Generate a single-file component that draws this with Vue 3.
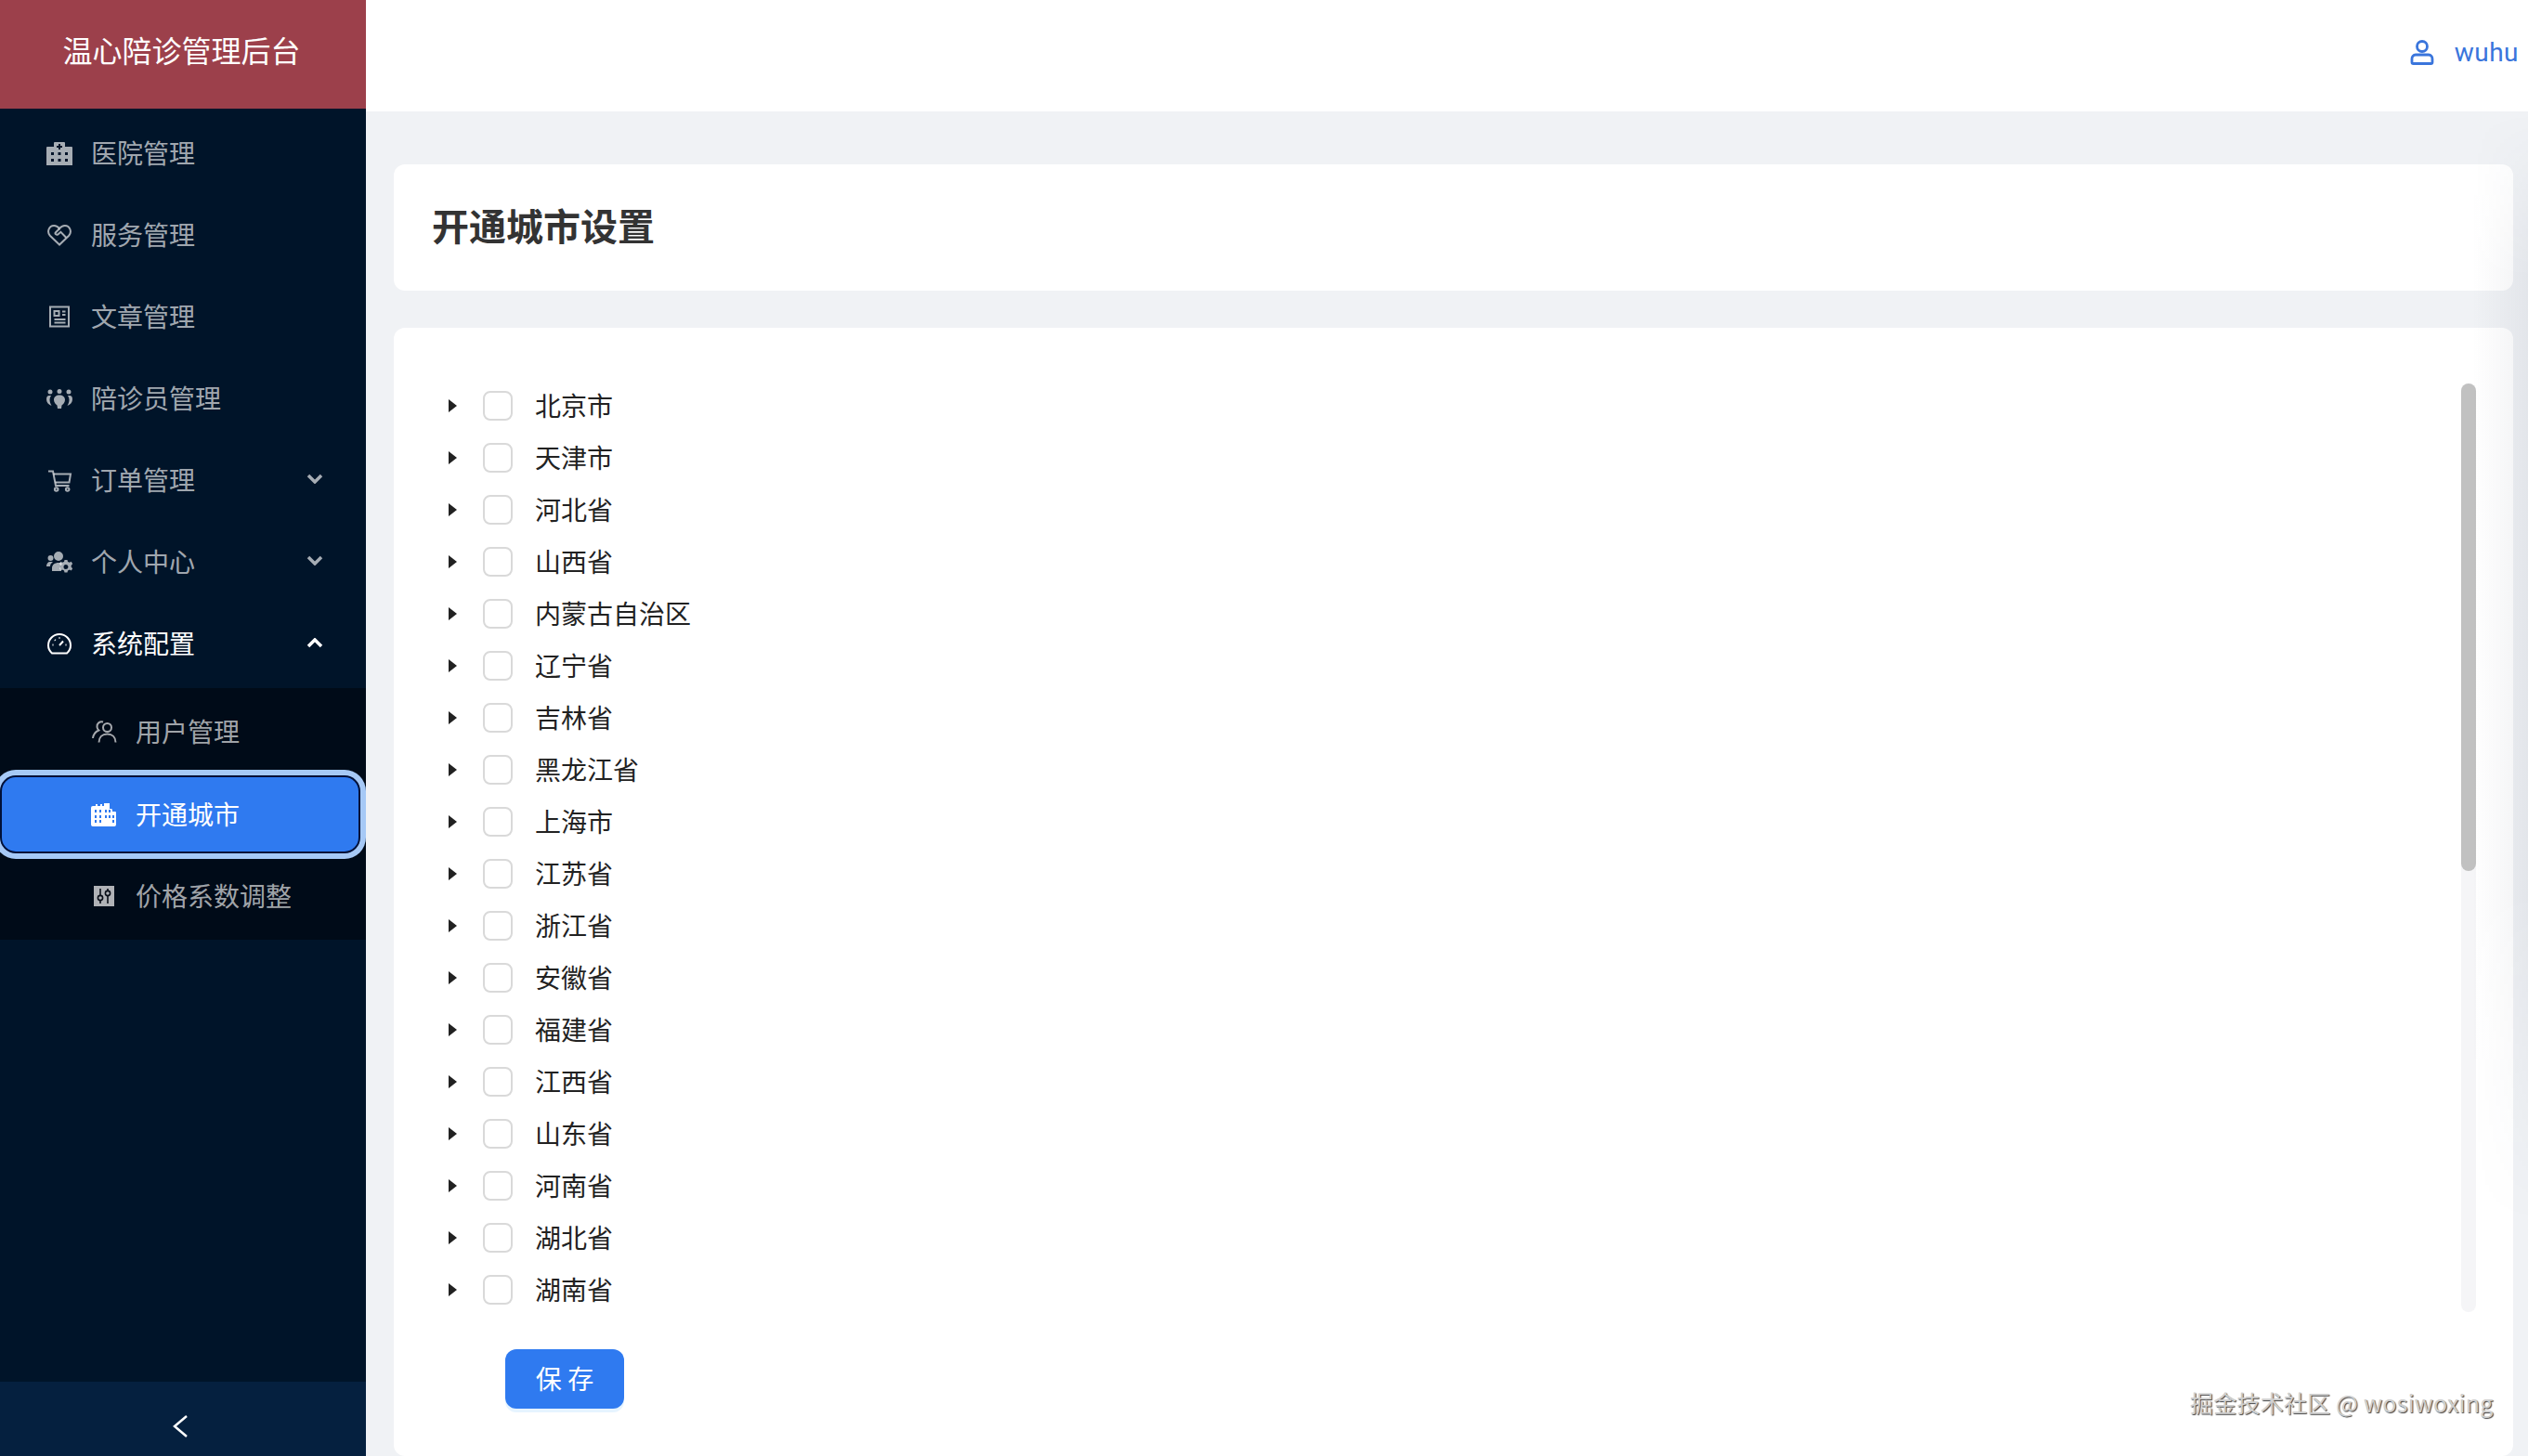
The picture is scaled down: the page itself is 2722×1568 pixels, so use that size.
<script setup>
const icons = {
  hospital: [{ f: 1, r: 'evenodd', d: 'M1 7h7V3a1 1 0 0 1 1-1h10a1 1 0 0 1 1 1v4h7a1 1 0 0 1 1 1v19H0V8a1 1 0 0 1 1-1zM13 4v2h-2v2h2v2h2V8h2V6h-2V4zM5 13v3h3v-3zM12.500 13v3h3v-3zM20 13v3h3v-3zM5 20v3h3v-3zM12.500 20v3h3v-3zM20 20v3h3v-3z' }],
  heart: [{ d: 'M14 24.500 3.800 14.700C.5 11.200 2.200 4 8.200 4c2.600 0 4.400 1.300 5.800 3.200C15.400 5.300 17.200 4 19.800 4c6 0 7.700 7.200 4.400 10.700z' }, { d: 'M14 7.200 9.800 11.500c-.9 1 .9 3.100 2.600 1.900l3-2.600 5.700 6' }],
  article: [{ d: 'M4 3.500h20v21H4z' }, { d: 'M8.500 8h5v5h-5zM17 8.500h3.500M17 12h3.500M8.500 17h12M8.500 20.500h12' }],
  team: [
    { f: 1, d: 'M6.500 7a2.500 2.500 0 1 1-5 0 2.500 2.500 0 0 1 5 0zM16.500 6.500a2.500 2.500 0 1 1-5 0 2.500 2.500 0 0 1 5 0zM26.500 7a2.500 2.500 0 1 1-5 0 2.500 2.500 0 0 1 5 0z' },
    { f: 1, d: 'M3 11c-2 0-3 1.500-3 4 0 3.500 2 5.500 5.500 7-1-2-2-4-2-6.500 0-1.500.5-3 1.500-4.500zM25 11c2 0 3 1.500 3 4 0 3.500-2 5.500-5.500 7 1-2 2-4 2-6.500 0-1.500-.5-3-1.500-4.500zM14 10.500c3.500 0 6 2 6 5 0 3-2 5-3.500 6l-.5 3.500h-4l-.5-3.500C10 20.500 8 18.500 8 15.500c0-3 2.500-5 6-5z' }
  ],
  cart: [{ d: 'M2 4.500h5l3 15.500h14.500' }, { d: 'M7.500 7.500H26l-1.500 9h-15' }, { d: 'M12.500 24a1.800 1.800 0 1 1-3.600 0 1.800 1.800 0 0 1 3.600 0zM24.500 24a1.800 1.800 0 1 1-3.600 0 1.800 1.800 0 0 1 3.600 0z' }],
  group: [
    { f: 1, d: 'M18 8a5 5 0 1 1-10 0 5 5 0 0 1 10 0zM7.500 10a3 3 0 1 1-6 0 3 3 0 0 1 6 0zM0 19c0-3 1.500-5 4-5h3c-2 1.500-3 3-3 5zM6 24v-3c0-4 3-6 7-6 1.500 0 3 .3 4 1-2 2-2.500 5-1 8z' },
    { f: 1, r: 'evenodd', d: 'M22 13h3l.5 2 2 .8 1.700-1 1.500 2.500-1.500 1.400v2l1.500 1.400-1.500 2.500-1.700-1-2 .8-.5 2h-3l-.5-2-2-.8-1.700 1-1.500-2.500 1.500-1.400v-2l-1.500-1.400 1.500-2.500 1.700 1 2-.8zM23.500 18a2.500 2.500 0 1 0 0 5 2.500 2.500 0 0 0 0-5z', t: 'translate(-2.500 -1)' }
  ],
  gauge: [{ d: 'M6 24.500C3.500 22.300 2 19.300 2 16 2 9.400 7.400 4 14 4s12 5.400 12 12c0 3.300-1.500 6.300-4 8.500z' }, { d: 'M14 16l4-4.500M14 7.500v1M6.500 15.500h1M9 10l.7.7M20.500 15.500h1' }],
  users: [{ d: 'M13 9.500a4.500 4.500 0 1 0 9 0 4.500 4.500 0 0 0-9 0zM8.500 25.500c0-5.500 3.500-9 9-9s9 3.500 9 9' }, { d: 'M13 3.500C9.500 2.500 6 5 6.500 9c.2 1.500 1 2.800 1.800 3.500C5 14 2.500 17 2 21' }],
  city: [{ f: 1, r: 'evenodd', d: 'M2 5h3V3h2v2h3V3h2v2h2V2h6v6h2l1 1v2h3a1 1 0 0 1 1 1v13a2 2 0 0 1-2 2H2a2 2 0 0 1-2-2V7a2 2 0 0 1 2-2zM4 9v3h2V9zM9 9v3h2V9zM4 15v3h2v-3zM9 15v3h2v-3zM4 20v3h2v-3zM9 20v3h2v-3zM15 9v3h2V9zM19 9v3h2V9zM15 15v3h2v-3zM19 15v3h2v-3zM23 15v3h2v-3zM23 20v3h2v-3z' }]
}

const menu = [
  { label: '医院管理', icon: 'hospital' },
  { label: '服务管理', icon: 'heart' },
  { label: '文章管理', icon: 'article' },
  { label: '陪诊员管理', icon: 'team' },
  { label: '订单管理', icon: 'cart', arrow: 'down' },
  { label: '个人中心', icon: 'group', arrow: 'down' },
  { label: '系统配置', icon: 'gauge', arrow: 'up', open: true }
]
const provinces = ['北京市', '天津市', '河北省', '山西省', '内蒙古自治区', '辽宁省', '吉林省', '黑龙江省', '上海市', '江苏省', '浙江省', '安徽省', '福建省', '江西省', '山东省', '河南省', '湖北省', '湖南省']
</script>

<template>
  <div class="app">
    <aside class="side">
      <div class="logo">温心陪诊管理后台</div>
      <nav class="menu">
        <div v-for="m in menu" :key="m.label" class="row" :class="{ open: m.open }">
          <svg class="ic" viewBox="0 0 28 28">
            <path v-for="(p, i) in icons[m.icon]" :key="i" :d="p.d" :fill="p.f ? 'currentColor' : 'none'" :fill-rule="p.r" :stroke="p.f ? 'none' : 'currentColor'" :transform="p.t" stroke-width="2" />
          </svg>
          <span class="lab">{{ m.label }}</span>
          <svg v-if="m.arrow" class="chev" :class="m.arrow" viewBox="0 0 18 12">
            <path :d="m.arrow === 'down' ? 'M2 3l7 7 7-7' : 'M2 9l7-7 7 7'" />
          </svg>
        </div>
        <div class="sub">
          <div class="row subrow">
            <svg class="ic" viewBox="0 0 28 28">
              <path v-for="(p, i) in icons.users" :key="i" :d="p.d" fill="none" stroke="currentColor" stroke-width="2" />
            </svg>
            <span class="lab">用户管理</span>
          </div>
          <div class="row subrow active">
            <svg class="ic" viewBox="0 0 28 28">
              <path :d="icons.city[0].d" fill="currentColor" fill-rule="evenodd" />
            </svg>
            <span class="lab">开通城市</span>
          </div>
          <div class="row subrow">
            <svg class="ic" viewBox="0 0 28 28">
              <rect x="3" y="3" width="22" height="22" fill="#b0b2b6" />
              <path d="M10 6v16M18 6v16" stroke="#0a0f18" stroke-width="1.600" fill="none" />
              <circle cx="10" cy="16" r="2.600" fill="#b0b2b6" stroke="#0a0f18" stroke-width="1.600" />
              <circle cx="18" cy="11" r="2.600" fill="#b0b2b6" stroke="#0a0f18" stroke-width="1.600" />
            </svg>
            <span class="lab">价格系数调整</span>
          </div>
        </div>
      </nav>
      <div class="trigger">
        <svg class="back" viewBox="0 0 18 26"><path d="M16 2L3 13l13 11" /></svg>
      </div>
    </aside>

    <main class="main">
      <header class="top">
        <svg class="uic" viewBox="0 0 26 30">
          <path d="M18.500 9a5.500 5.500 0 1 1-11 0 5.500 5.500 0 0 1 11 0z" />
          <path d="M6 18h14c2.500 0 4 2 4 4.500V26c0 1-.6 1.500-1.500 1.500h-19C2.600 27.500 2 27 2 26v-3.500C2 20 3.500 18 6 18z" />
        </svg>
        <span class="uname">wuhu</span>
      </header>
      <div class="content">
        <section class="card head"><h1>开通城市设置</h1></section>
        <section class="card body">
          <div class="scroll">
            <ul class="tree">
              <li v-for="p in provinces" :key="p" class="node">
                <i class="tri"></i>
                <i class="box"></i>
                <span class="lab">{{ p }}</span>
              </li>
            </ul>
            <div class="track"><div class="thumb"></div></div>
          </div>
          <button class="save" type="button">保 存</button>
        </section>
      </div>
    </main>
    <div class="edge"></div>
    <div class="mark">掘金技术社区 @ wosiwoxing</div>
  </div>
</template>

<style>
html, body { margin: 0; padding: 0; overflow: hidden; }
</style>

<style scoped>
.app {
  position: relative;
  display: flex;
  width: 2722px;
  height: 1568px;
  overflow: hidden;
  background: #f0f2f5;
  font-family: "Noto Sans CJK SC", "Noto Sans", sans-serif;
  font-size: 28px;
}
.side {
  flex: 0 0 394px;
  display: flex;
  flex-direction: column;
  background: #001429;
  color: rgba(255, 255, 255, 0.65);
  overflow: hidden;
}
.logo {
  height: 117px;
  line-height: 106px;
  padding-right: 3px;
  box-sizing: border-box;
  text-align: center;
  background: #9c404b;
  color: #fff;
  font-size: 32px;
  flex: none;
}
.menu { flex: 1; padding-top: 4px; display: flex; flex-direction: column; }
.row {
  display: flex;
  align-items: center;
  flex: none;
  height: 80px;
  margin: 4px;
  padding: 0 42px 0 46px;
  gap: 20px;
  box-sizing: border-box;
}
.lab { padding-bottom: 3px; }
.row.open { color: #fff; margin-bottom: 8px; }
.ic { width: 28px; height: 28px; flex: none; }
.chev { width: 18px; height: 12px; margin-left: auto; fill: none; stroke: currentColor; stroke-width: 3.500; }
.chev.down { margin-bottom: 4px; }
.sub {
  display: flex;
  flex-direction: column;
  flex: none;
  background: #000b18;
  padding: 3px 0 0;
  height: 271px;
  box-sizing: border-box;
}
.subrow { padding-left: 96px; margin: 4px 4px 4px 2px; }
.active {
  width: 384px;
  margin-top: 5px;
  background: #2f7af0;
  color: #fff;
  border-radius: 15px;
  box-shadow: 0 0 0 2px #001038, 0 0 0 8px #a6c9f6;
}
.trigger {
  height: 80px;
  background: #05203f;
  display: flex;
  align-items: center;
  justify-content: center;
  flex: none;
  padding: 16px 6px 0 0;
  box-sizing: border-box;
}
.back { width: 18px; height: 26px; fill: none; stroke: #fff; stroke-width: 2.500; }
.main { flex: 1; min-width: 0; display: flex; flex-direction: column; }
.top {
  height: 120px;
  flex: none;
  background: #fff;
  display: flex;
  align-items: center;
  justify-content: flex-end;
  gap: 22px;
  padding: 0 10px 8px 0;
  box-sizing: border-box;
  color: #3a75dc;
}
.uic { width: 26px; height: 30px; fill: none; stroke: currentColor; stroke-width: 2.800; }
.uname { font-family: Roboto, sans-serif; font-size: 28px; letter-spacing: 0.5px; }
.content {
  flex: 1;
  min-height: 0;
  display: flex;
  flex-direction: column;
  gap: 40px;
  padding: 57px 16px 0 30px;
}
.card { background: #fff; border-radius: 12px; }
.head { height: 136px; flex: none; display: flex; align-items: center; padding-left: 41px; }
h1 { margin: 0 0 6px; font-size: 40px; font-weight: 600; color: #333; line-height: 1; }
.body { flex: 1; padding: 56px 40px 0 41px; min-height: 0; }
.scroll { display: flex; justify-content: space-between; }
.tree { list-style: none; margin: 0; padding: 0; }
.node { display: flex; align-items: center; height: 56px; color: #222; }
.tri {
  width: 0;
  height: 0;
  margin-left: 18px;
  border-left: 9px solid #222;
  border-top: 7px solid transparent;
  border-bottom: 7px solid transparent;
}
.box {
  width: 32px;
  height: 32px;
  margin: 0 24px 0 28px;
  border: 2px solid #d9d9d9;
  border-radius: 8px;
  box-sizing: border-box;
  background: #fff;
}
.track {
  width: 16px;
  height: 1000px;
  margin-top: 4px;
  background: #f5f5f7;
  border-radius: 8px;
}
.thumb { height: 525px; background: #c1c1c1; border-radius: 8px; }
.save {
  display: block;
  width: 128px;
  height: 64px;
  margin: 36px 0 0 79px;
  border: 0;
  border-radius: 12px;
  background: #2f7af0;
  color: #fff;
  font: inherit;
  box-shadow: 0 4px 0 rgba(5, 145, 255, 0.1);
  padding: 0 0 3px;
}
.edge {
  position: absolute;
  right: 0;
  top: 120px;
  width: 60px;
  height: 1200px;
  background: linear-gradient(90deg, rgba(30, 40, 70, 0), rgba(30, 40, 70, 0.06));
  -webkit-mask-image: linear-gradient(180deg, transparent, #000 15%, #000 70%, transparent);
  mask-image: linear-gradient(180deg, transparent, #000 15%, #000 70%, transparent);
  pointer-events: none;
}
.mark {
  position: absolute;
  left: 2358px;
  top: 1492px;
  font-size: 25px;
  line-height: 36px;
  letter-spacing: 0.25px;
  color: #cfcfcf;
  text-shadow: 1px 1px 1px #444;
  white-space: nowrap;
}
</style>
